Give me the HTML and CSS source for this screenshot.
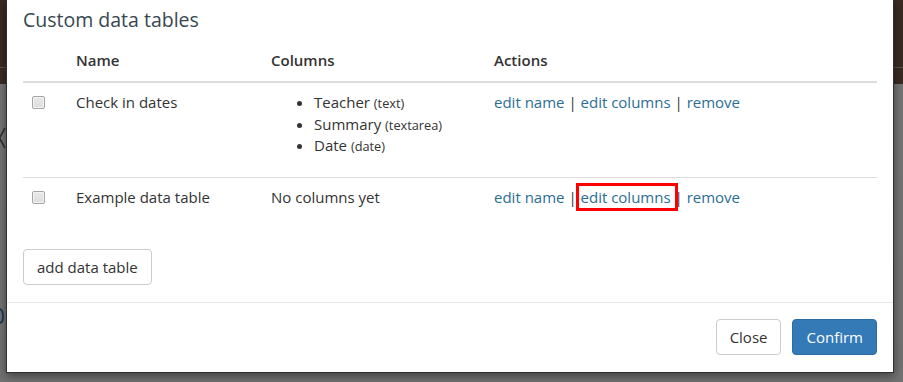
FILE: index.html
```html
<!DOCTYPE html>
<html lang="en">
<head>
<meta charset="utf-8">
<title>Custom data tables</title>
<link rel="stylesheet" href="styles.css">
</head>
<body>
<svg class="bg-chevron" width="8" height="24" viewBox="0 0 8 24" aria-hidden="true"><polyline points="6,2 0.5,12 6,22" fill="none" stroke="#2a2a2a" stroke-width="1.6"/></svg>
<svg class="bg-glyph" width="6" height="20" viewBox="0 0 6 20" aria-hidden="true"><path d="M0,4 C3,4 4,8 4,12 C4,16 2,18 0,18" fill="none" stroke="#1f3550" stroke-width="2"/></svg>
<div class="modal">
  <div class="modal-header">
    <h4 class="modal-title">Custom data tables</h4>
  </div>
  <div class="modal-body">
    <table class="dt">
      <colgroup>
        <col class="c-check"><col class="c-name"><col class="c-cols"><col class="c-act">
      </colgroup>
      <thead>
        <tr><th></th><th>Name</th><th>Columns</th><th>Actions</th></tr>
      </thead>
      <tbody>
        <tr>
          <td class="check-cell"><input type="checkbox" class="cb"></td>
          <td>Check in dates</td>
          <td>
            <ul class="col-list">
              <li>Teacher <small>(text)</small></li>
              <li>Summary <small>(textarea)</small></li>
              <li>Date <small>(date)</small></li>
            </ul>
          </td>
          <td class="actions"><a href="#">edit name</a> | <a href="#">edit columns</a> | <a href="#">remove</a></td>
        </tr>
        <tr class="sep">
          <td class="check-cell"><input type="checkbox" class="cb"></td>
          <td>Example data table</td>
          <td>No columns yet</td>
          <td class="actions"><a href="#">edit name</a> | <a href="#" class="marked">edit columns</a> | <a href="#">remove</a></td>
        </tr>
      </tbody>
    </table>
    <button class="btn btn-default" type="button">add data table</button>
  </div>
  <div class="modal-footer">
    <button class="btn btn-default" type="button">Close</button>
    <button class="btn btn-primary" type="button">Confirm</button>
  </div>
</div>
</body>
</html>
```
FILE: styles.css
```css
html, body {
  margin: 0;
  padding: 0;
}
body {
  width: 903px;
  height: 382px;
  overflow: hidden;
  position: relative;
  font-family: "Open Sans", "Noto Sans", "Liberation Sans", sans-serif;
  font-size: 15px;
  line-height: 1.42857;
  color: #333;
  background:
    linear-gradient(to bottom,
      #3a2a23 0, #3a2a23 67px,
      #5e4f48 67px, #5e4f48 68px,
      #3a2a23 68px, #3a2a23 84px,
      #757575 84px, #727272 100%);
}
.bg-chevron {
  position: absolute;
  left: -1px;
  top: 126px;
}
.bg-glyph {
  position: absolute;
  left: -1px;
  top: 305px;
}
.modal {
  box-sizing: border-box;
  width: 888px;
  margin-left: 6px;
  background: #fff;
  border: 1px solid #2f2f2f;
  border-top: 0;
  box-shadow: 0 3px 9px rgba(0, 0, 0, 0.45);
}
.modal-header {
  padding: 9px 16px 0;
}
.modal-title {
  margin: 0;
  font-size: 19.5px;
  font-weight: 400;
  line-height: 22px;
  color: #37474f;
}
.modal-body {
  padding: 9px 16px 17px;
}
.dt {
  width: 100%;
  table-layout: fixed;
  border-collapse: collapse;
  border-spacing: 0;
  margin-bottom: 31px;
}
.c-check { width: 45px; }
.c-name { width: 195px; }
.c-cols { width: 223px; }
.dt th {
  text-align: left;
  font-weight: 600;
  padding: 10px 8px;
  border-bottom: 2px solid #ddd;
  vertical-align: bottom;
  color: #333;
}
.dt td {
  padding: 9px 8px 10px;
  vertical-align: top;
}
.dt tr.sep td {
  border-top: 1px solid #ddd;
}
.dt td.check-cell {
  padding-left: 9px;
}
.cb {
  -webkit-appearance: none;
  appearance: none;
  display: block;
  box-sizing: border-box;
  width: 13px;
  height: 13px;
  margin: 4px 0 0;
  border: 1px solid #a6a6a6;
  border-radius: 2px;
  background: linear-gradient(to bottom, #e9e9e9, #dcdcdc);
  box-shadow: inset 0 0 0 1px #f4f4f4;
}
.col-list {
  margin: 0 0 10px;
  padding-left: 43px;
}
.col-list small {
  font-size: 85%;
}
.actions a {
  color: #2b6e94;
  text-decoration: none;
}
.actions a.marked {
  position: relative;
}
.actions a.marked::after {
  content: "";
  position: absolute;
  left: -5px;
  right: -7px;
  top: -4px;
  bottom: -4px;
  border: 3px solid #f00;
  pointer-events: none;
}
.btn {
  display: inline-block;
  box-sizing: border-box;
  height: 36px;
  padding: 7px 13px;
  font-family: inherit;
  font-size: 15px;
  line-height: 20px;
  border: 1px solid #ccc;
  border-radius: 4px;
  background: #fff;
  color: #333;
  cursor: pointer;
}
.btn-primary {
  background: #337ab7;
  border-color: #2e6da4;
  color: #fff;
}
.modal-footer {
  display: flex;
  justify-content: flex-end;
  gap: 11px;
  padding: 16px 16px 17px;
  border-top: 1px solid #e5e5e5;
}
```
